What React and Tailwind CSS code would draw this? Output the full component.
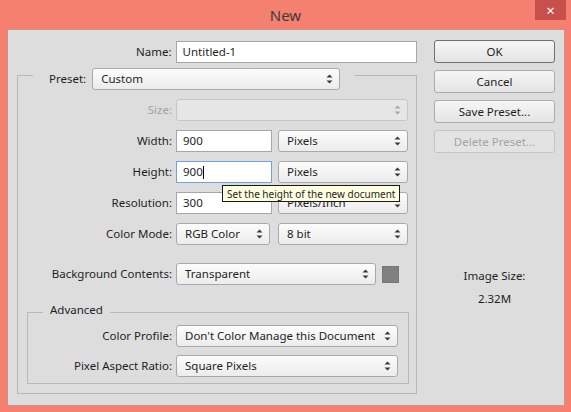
import React from 'react';

const Arrows = ({ color = '#3a3a3a' }) => (
  <svg width="7" height="10" viewBox="0 0 7 10">
    <path d="M3.5 0.5 L6.5 3.5 L0.5 3.5 Z" fill={color} />
    <path d="M0.5 6.5 L6.5 6.5 L3.5 9.5 Z" fill={color} />
  </svg>
);

const Select = ({ className, children, disabled }) => (
  <div
    className={`${className} h-[22px] flex items-center justify-between pl-[8px] pr-[6px] rounded-[3px] border ${
      disabled ? 'border-[#c6c6c6] bg-[#e6e6e6]' : 'border-[#a9a9a9] bg-linear-to-b from-[#fcfcfc] to-[#ececec]'
    }`}
  >
    <span className="whitespace-nowrap overflow-hidden">{children}</span>
    <Arrows color={disabled ? '#a8a8a8' : '#3a3a3a'} />
  </div>
);

const Input = ({ className, children, focused }) => (
  <div
    className={`${className} h-[22px] flex items-center pl-[6px] bg-white border ${
      focused ? 'border-[#6aa6e4]' : 'border-[#a6a6a6]'
    }`}
  >
    {children}
  </div>
);

const Button = ({ children, primary, disabled }) => (
  <div
    className={`w-[121px] h-[23px] flex items-center justify-center rounded-[3px] border ${
      disabled
        ? 'border-[#c4c4c4] bg-[#e3e3e3] text-[#a3a3a3]'
        : primary
        ? 'border-[#6f6f6f] bg-linear-to-b from-[#f6f6f6] to-[#e4e4e4]'
        : 'border-[#acacac] bg-linear-to-b from-[#f6f6f6] to-[#e4e4e4]'
    }`}
  >
    {children}
  </div>
);

const Row = ({ label, labelWidth, children, muted }) => (
  <div className="flex items-center h-[22px]">
    <div className={`${labelWidth} text-right ${muted ? 'text-[#a2a2a2]' : ''}`}>{label}</div>
    <div className="ml-[4px] flex items-center">{children}</div>
  </div>
);

export default function App() {
  return (
    <div
      className="w-[571px] h-[412px] bg-[#f5806f] flex flex-col text-[11.5px] text-[#1e1e1e] leading-[16px]"
      style={{ fontFamily: '"Noto Sans", "Open Sans", sans-serif' }}
    >
      {/* Title bar */}
      <div className="h-[29px] grid grid-cols-[1fr_auto_1fr] items-start">
        <div />
        <div className="pt-[5px] text-[15px] leading-[20px] text-[#3b3b3b]">New</div>
        <div className="flex justify-end pr-[5px]">
          <div className="w-[31px] h-[20px] bg-[#c84f4b] flex items-center justify-center text-white text-[15px] leading-none">
            ×
          </div>
        </div>
      </div>

      {/* Client area */}
      <div className="ml-[7px] w-[558px] h-[377px] bg-[#dddddd] border border-[#c9938a] flex">
        {/* Left column */}
        <div className="w-[409px] pt-[11px] flex flex-col">
          <div className="flex items-center h-[22px]">
            <div className="w-[164px] text-right">Name:</div>
            <Input className="ml-[4px] w-[242px]">Untitled-1</Input>
          </div>

          {/* Preset group */}
          <div className="mt-[12px] ml-[9px] w-[400px] border border-[#b8b8b8] pb-[9px] flex flex-col">
            <div className="-mt-[8px] ml-[15px] self-start flex items-center h-[22px] pl-[16px] pr-[15px] bg-[#dddddd]">
              <span>Preset:</span>
              <Select className="ml-[6px] w-[248px]">Custom</Select>
            </div>

            <div className="mt-[9px] flex flex-col gap-[9px]">
              <Row label="Size:" labelWidth="w-[154px]" muted>
                <Select className="w-[232px]" disabled />
              </Row>
              <Row label="Width:" labelWidth="w-[154px]">
                <Input className="w-[96px]">900</Input>
                <Select className="ml-[6px] w-[130px]">Pixels</Select>
              </Row>
              <Row label="Height:" labelWidth="w-[154px]">
                <div className="relative flex items-center">
                  <Input className="w-[96px]" focused>
                    900<span className="w-px h-[13px] bg-black" />
                  </Input>
                  <Select className="ml-[6px] w-[130px]">Pixels</Select>
                  <div className="absolute z-10 left-[46px] top-[24px] h-[17px] px-[4px] flex items-center bg-[#ffffe1] border border-[#1a1a1a] text-[10px] leading-[14px] whitespace-nowrap">
                    Set the height of the new document
                  </div>
                </div>
              </Row>
              <Row label="Resolution:" labelWidth="w-[154px]">
                <Input className="w-[96px]">300</Input>
                <Select className="ml-[6px] w-[130px]">Pixels/Inch</Select>
              </Row>
              <Row label="Color Mode:" labelWidth="w-[154px]">
                <Select className="w-[94px]">RGB Color</Select>
                <Select className="ml-[8px] w-[130px]">8 bit</Select>
              </Row>
            </div>

            <div className="mt-[18px]">
              <Row label="Background Contents:" labelWidth="w-[154px]">
                <Select className="w-[200px]">Transparent</Select>
                <div className="ml-[6px] w-[17px] h-[17px] bg-[#808080] border border-[#767676]" />
              </Row>
            </div>

            {/* Advanced group */}
            <div className="mt-[27px] ml-[9px] w-[382px] border border-[#b8b8b8] pb-[6px] flex flex-col">
              <div className="-mt-[11px] ml-[15px] self-start h-[16px] px-[7px] bg-[#dddddd]">Advanced</div>
              <div className="mt-[7px] flex flex-col gap-[8px]">
                <Row label="Color Profile:" labelWidth="w-[144px]">
                  <Select className="w-[222px]">Don't Color Manage this Document</Select>
                </Row>
                <Row label="Pixel Aspect Ratio:" labelWidth="w-[144px]">
                  <Select className="w-[222px]">Square Pixels</Select>
                </Row>
              </div>
            </div>
          </div>
        </div>

        {/* Right column */}
        <div className="ml-[17px] w-[121px] pt-[10px] flex flex-col">
          <div className="flex flex-col gap-[7px]">
            <Button primary>OK</Button>
            <Button>Cancel</Button>
            <Button>Save Preset...</Button>
            <Button disabled>Delete Preset...</Button>
          </div>
          <div className="mt-[115px] text-center">Image Size:</div>
          <div className="mt-[7px] text-center">2.32M</div>
        </div>
      </div>
    </div>
  );
}
